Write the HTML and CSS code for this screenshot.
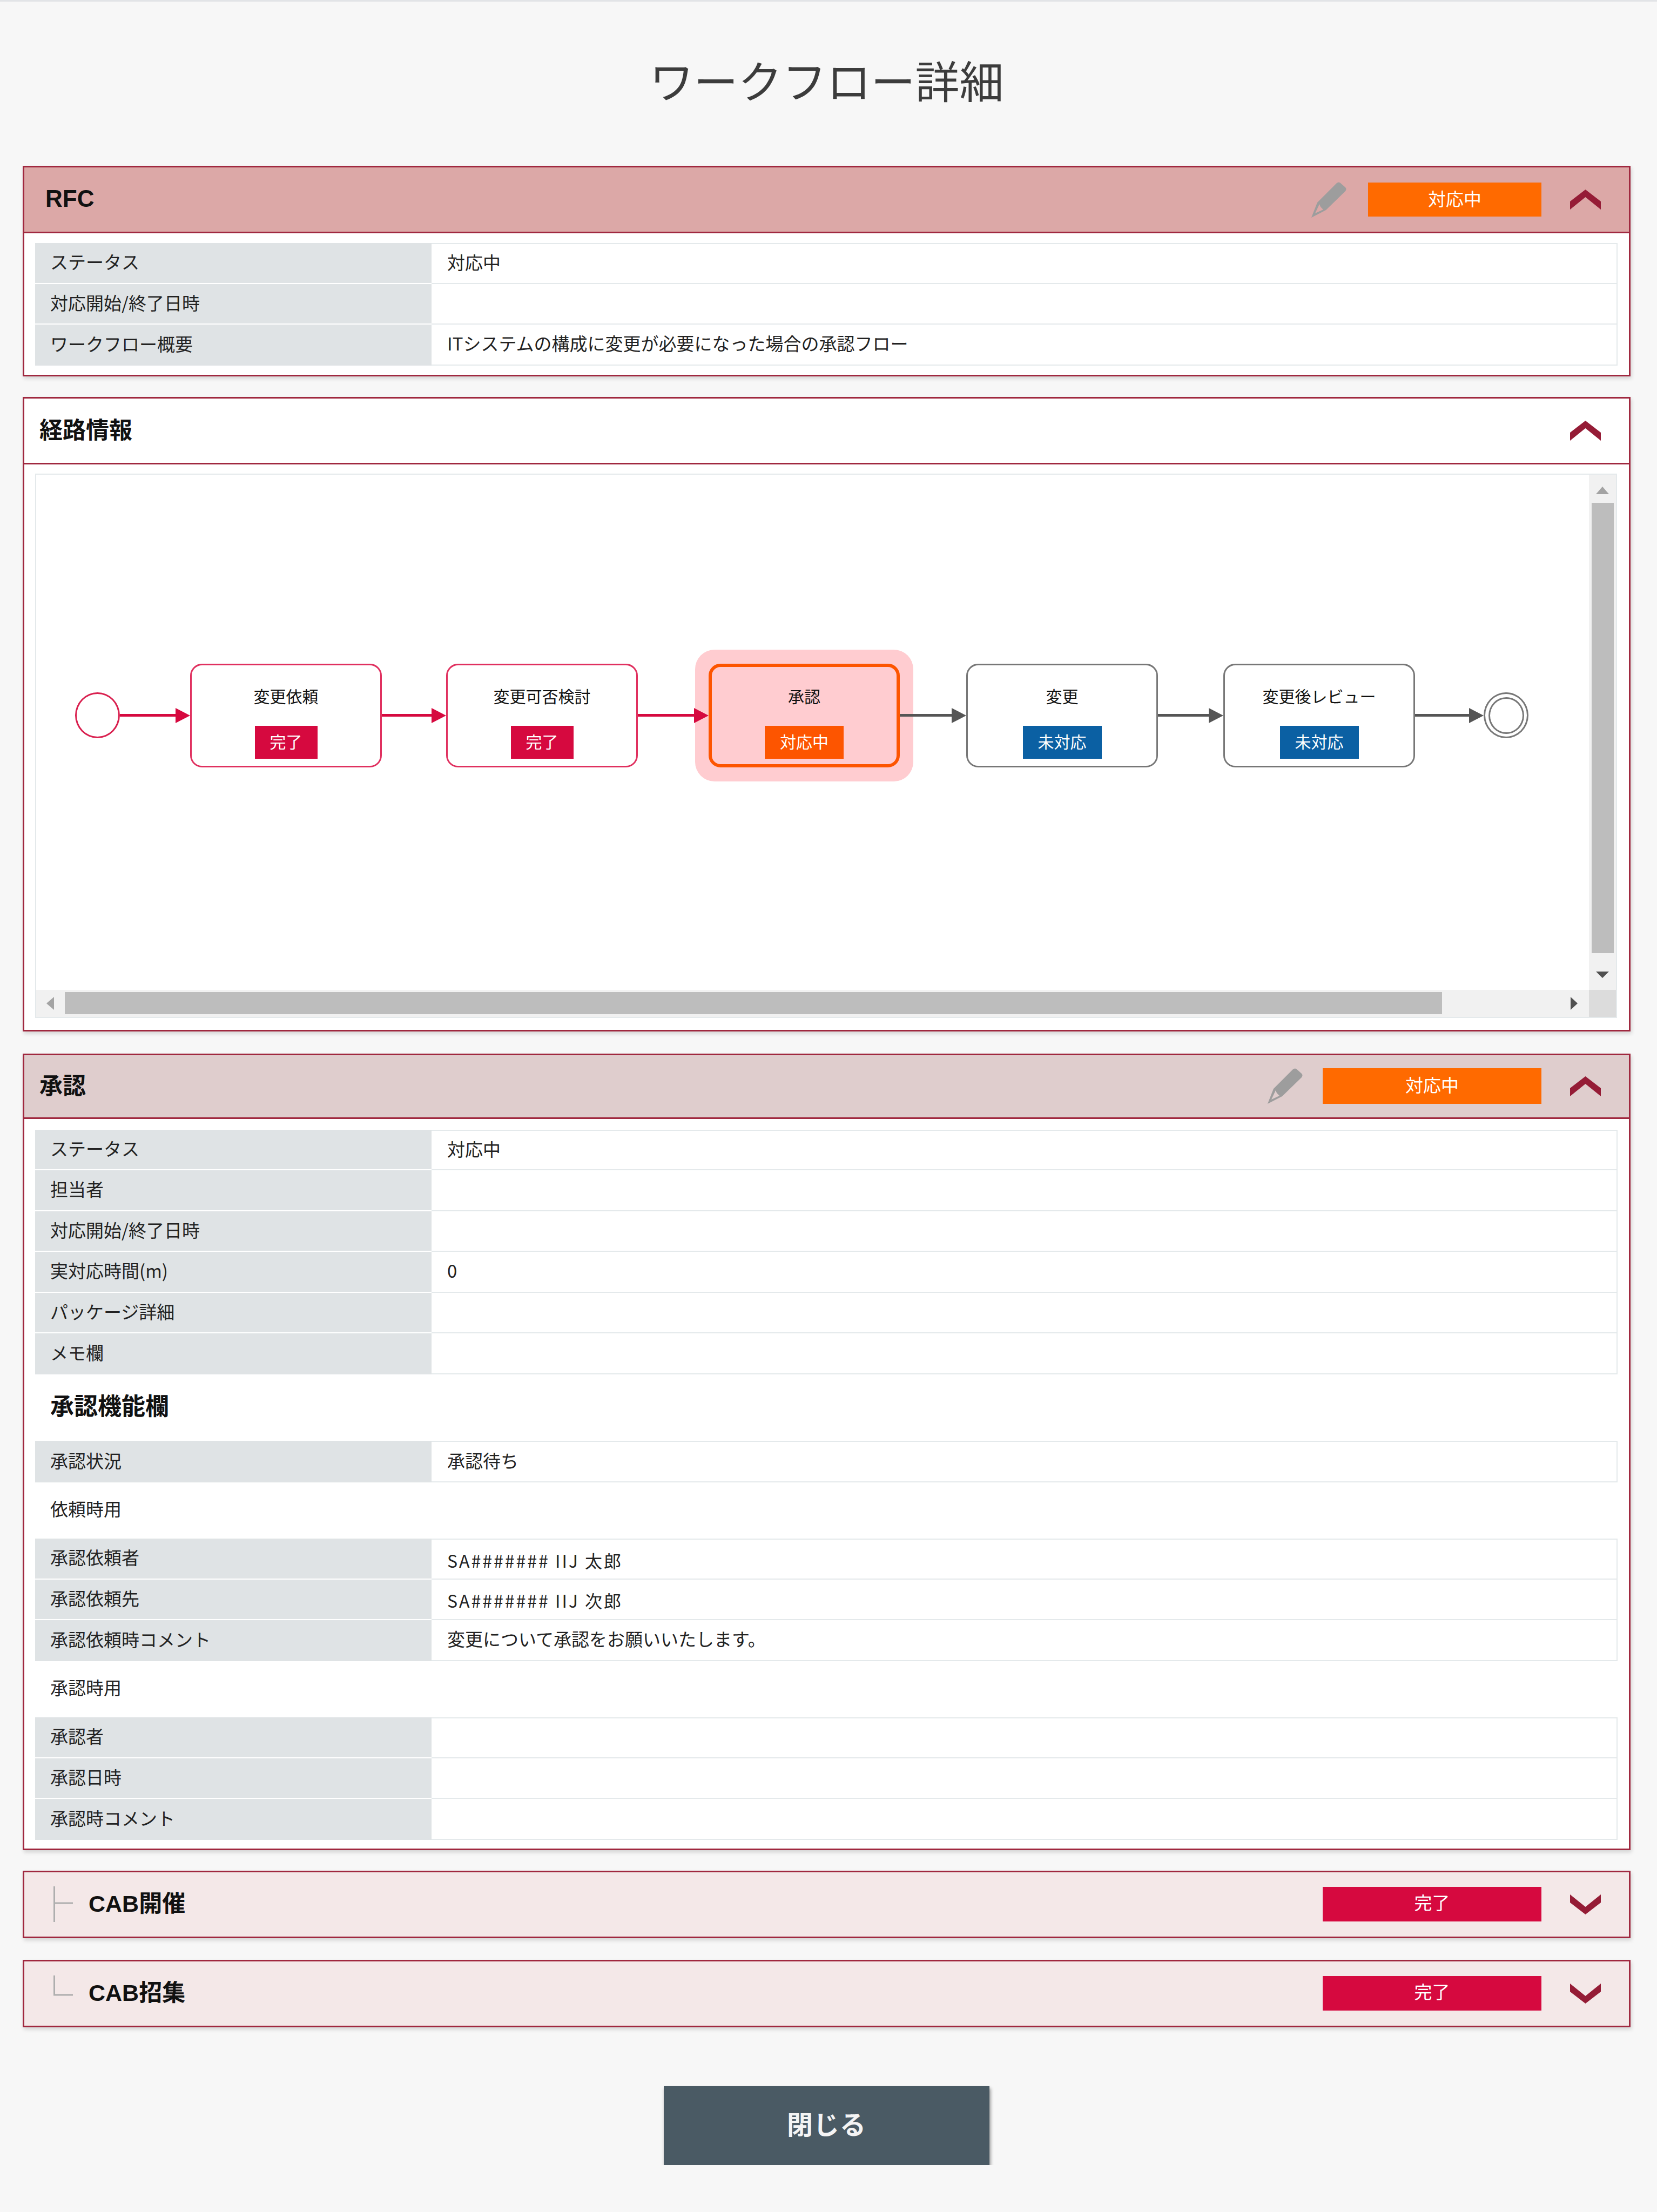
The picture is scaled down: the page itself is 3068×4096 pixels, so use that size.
FILE: index.html
```html
<!DOCTYPE html>
<html lang="ja">
<head>
<meta charset="utf-8">
<title>ワークフロー詳細</title>
<link rel="stylesheet" href="styles.css">
</head>
<body>
<svg class="defs" aria-hidden="true">
  <symbol id="chev" viewBox="0 0 57 37"><polygon points="28.5,0 57,22 57,37 28.5,14 0,37 0,22"/></symbol>
  <symbol id="pencil" viewBox="0 0 65 66"><path fill-rule="evenodd" d="M0 66 L11 38 L47 2 Q51 -1 54 2 L63 10 Q66 13 63 17 L27 52 Z M7 58 L22 51 L17 46 L15 41 Z"/></symbol>
</svg>
<main class="page">
  <h1 class="title">ワークフロー詳細</h1>

  <section class="card">
    <header class="head head-rfc">
      <h2 class="head-title">RFC</h2>
      <svg class="pencil"><use href="#pencil"/></svg>
      <span class="status status-orange status-narrow">対応中</span>
      <svg class="chev"><use href="#chev"/></svg>
    </header>
    <div class="body body-rfc">
      <dl class="kv">
        <dt>ステータス</dt><dd>対応中</dd>
        <dt>対応開始/終了日時</dt><dd></dd>
        <dt>ワークフロー概要</dt><dd>ITシステムの構成に変更が必要になった場合の承認フロー</dd>
      </dl>
    </div>
  </section>

  <section class="card">
    <header class="head head-route">
      <h2 class="head-title">経路情報</h2>
      <svg class="chev chev-solo"><use href="#chev"/></svg>
    </header>
    <div class="body body-route">
      <div class="viewport">
        <div class="flow">
          <div class="event event-start"></div>
          <div class="arrow arrow-done w130"><span class="tail"></span><span class="tip"></span></div>
          <div class="node node-done">
            <div class="node-label">変更依頼</div>
            <div class="node-status bg-red">完了</div>
          </div>
          <div class="arrow arrow-done w119"><span class="tail"></span><span class="tip"></span></div>
          <div class="node node-done">
            <div class="node-label">変更可否検討</div>
            <div class="node-status bg-red">完了</div>
          </div>
          <div class="arrow arrow-done w131"><span class="tail"></span><span class="tip"></span></div>
          <div class="node node-active">
            <div class="node-label">承認</div>
            <div class="node-status bg-flow-orange">対応中</div>
          </div>
          <div class="arrow arrow-todo w123"><span class="tail"></span><span class="tip"></span></div>
          <div class="node node-todo">
            <div class="node-label">変更</div>
            <div class="node-status bg-blue">未対応</div>
          </div>
          <div class="arrow arrow-todo w121"><span class="tail"></span><span class="tip"></span></div>
          <div class="node node-todo">
            <div class="node-label">変更後レビュー</div>
            <div class="node-status bg-blue">未対応</div>
          </div>
          <div class="arrow arrow-todo w127"><span class="tail"></span><span class="tip"></span></div>
          <div class="event event-end"><div class="event-inner"></div></div>
        </div>
        <div class="vbar">
          <span class="tri tri-up"></span>
          <span class="vthumb"></span>
          <span class="tri tri-down"></span>
        </div>
        <div class="hbar">
          <span class="tri tri-left"></span>
          <span class="hthumb"></span>
          <span class="tri tri-right"></span>
        </div>
        <div class="corner"></div>
      </div>
    </div>
  </section>

  <section class="card card-after-flow">
    <header class="head head-approve">
      <h2 class="head-title">承認</h2>
      <svg class="pencil pencil-wide"><use href="#pencil"/></svg>
      <span class="status status-orange status-tall">対応中</span>
      <svg class="chev"><use href="#chev"/></svg>
    </header>
    <div class="body body-approve">
      <dl class="kv">
        <dt>ステータス</dt><dd>対応中</dd>
        <dt>担当者</dt><dd></dd>
        <dt>対応開始/終了日時</dt><dd></dd>
        <dt>実対応時間(m)</dt><dd>0</dd>
        <dt>パッケージ詳細</dt><dd></dd>
        <dt>メモ欄</dt><dd></dd>
      </dl>
      <h3 class="section-title">承認機能欄</h3>
      <dl class="kv kv-single">
        <dt>承認状況</dt><dd>承認待ち</dd>
      </dl>
      <p class="sub">依頼時用</p>
      <dl class="kv">
        <dt>承認依頼者</dt><dd><span class="user-name">SA####### IIJ 太郎</span></dd>
        <dt>承認依頼先</dt><dd><span class="user-name">SA####### IIJ 次郎</span></dd>
        <dt>承認依頼時コメント</dt><dd>変更について承認をお願いいたします。</dd>
      </dl>
      <p class="sub">承認時用</p>
      <dl class="kv">
        <dt>承認者</dt><dd></dd>
        <dt>承認日時</dt><dd></dd>
        <dt>承認時コメント</dt><dd></dd>
      </dl>
    </div>
  </section>

  <section class="card">
    <header class="head head-child">
      <svg class="tree" viewBox="0 0 36 66"><path d="M1.5 0V66M1.5 31H36"/></svg>
      <h2 class="head-title">CAB開催</h2>
      <span class="status status-red">完了</span>
      <svg class="chev chev-down"><use href="#chev"/></svg>
    </header>
  </section>

  <section class="card card-last">
    <header class="head head-child">
      <svg class="tree" viewBox="0 0 36 66"><path d="M1.5 0V36H36"/></svg>
      <h2 class="head-title">CAB招集</h2>
      <span class="status status-red">完了</span>
      <svg class="chev chev-down"><use href="#chev"/></svg>
    </header>
  </section>

  <div class="actions"><button class="close" type="button">閉じる</button></div>
</main>
</body>
</html>
```

FILE: styles.css
```css
* { box-sizing: border-box; }
html, body { margin: 0; padding: 0; }
body {
  background: #f7f7f7;
  border-top: 3px solid #e2e4e7;
  color: #222;
  font-family: "Noto Sans CJK JP", "Noto Sans", sans-serif;
  font-size: 33px;
}
.defs { position: absolute; width: 0; height: 0; }
.page { padding: 0 49px 0 42px; }
.title {
  margin: 94px 0 110px;
  height: 100px;
  line-height: 100px;
  font-size: 82px;
  font-weight: 400;
  color: #3c3c3c;
  text-align: center;
}

/* cards */
.card {
  border: 3px solid #a0283f;
  background: #fff;
  box-shadow: 2px 4px 7px rgba(0, 0, 0, .14);
}
.card + .card { margin-top: 38px; }
.card + .card-after-flow { margin-top: 41px; }
.card + .card-last { margin-top: 40px; }

.head {
  display: flex;
  align-items: center;
  padding: 0 52px 0 28px;
  border-bottom: 3px solid #a0283f;
}
.head-rfc { height: 122px; background: #dca8a7; padding-left: 39px; }
.head-route { height: 122px; }
.head-approve { height: 118px; background: #dfcdcd; }
.head-child { height: 119px; background: #f4e8e8; border-bottom: 0; padding-left: 54px; }
.head-title {
  margin: -1px 0 0;
  font-family: "Liberation Sans", "Noto Sans CJK JP", sans-serif;
  font-size: 43px;
  line-height: 60px;
  font-weight: 700;
  color: #111;
}
.head-rfc .head-title { margin-top: -4px; font-size: 44px; }
.head-child .head-title { margin-top: -3px; }

.pencil { width: 65px; height: 66px; margin-left: auto; fill: #9d9d9d; margin-right: 40px; }
.pencil-wide { margin-right: 37px; }

.status {
  display: flex;
  align-items: center;
  justify-content: center;
  width: 405px;
  height: 63px;
  padding-bottom: 5px;
  color: #fff;
  font-size: 33px;
  line-height: 1;
}
.status-narrow { width: 321px; }
.status-tall { height: 66px; }
.status-orange { background: #ff6a00; }
.status-red { background: #d6093f; margin-left: auto; height: 64px; padding-bottom: 8px; }

.chev { width: 57px; height: 37px; margin-left: 53px; fill: #951c36; flex: none; }
.chev-solo { margin-left: auto; }
.chev-down { transform: scaleY(-1); }

.tree { width: 36px; height: 66px; margin-right: 29px; fill: none; stroke: #aeaeae; stroke-width: 3; flex: none; }

.body { padding: 18px 21px 17px 20px; }
.body-route { padding: 17px 22px 22px 20px; }
.body-approve { padding-top: 20px; padding-bottom: 16px; }

/* key-value tables */
.kv {
  display: grid;
  grid-template-columns: 734px 1fr;
  grid-auto-rows: 75.5px;
  margin: 0;
}
.kv-single { grid-auto-rows: 77px; }
.kv dt, .kv dd {
  display: flex;
  align-items: center;
  margin: 0;
  padding-bottom: 3px;
  line-height: 1.2;
  color: #222;
}
.kv dt {
  padding-left: 28px;
  background: #dfe3e5;
  border-bottom: 2px solid #fff;
}
.kv dt:last-of-type { border-bottom: 0; }
.kv dd {
  padding-left: 29px;
  border-right: 2px solid #e4e9eb;
  border-bottom: 2px solid #e4e9eb;
}
.kv dd:first-of-type { border-top: 2px solid #e4e9eb; }
.user-name { letter-spacing: 3px; padding-top: 7px; font-size: 32px; }

.section-title {
  margin: 0;
  height: 123px;
  padding: 26px 0 0 28px;
  font-size: 44px;
  line-height: 60px;
  font-weight: 700;
  color: #111;
}
.sub {
  margin: 0;
  height: 104.5px;
  padding: 24px 0 0 28px;
  line-height: 48px;
}

/* diagram viewport */
.viewport {
  display: grid;
  grid-template-columns: 1fr 50px;
  grid-template-rows: 1fr 50px;
  height: 1008px;
  border: 2px solid #e4e9eb;
}
.flow {
  position: relative;
  z-index: 0;
  display: flex;
  align-items: center;
  padding: 0 0 62px 72px;
  overflow: hidden;
  background: #fff;
}
.event { flex: none; width: 83px; height: 85px; border-radius: 50%; background: #fff; }
.event-start { border: 3px solid #d9204f; }
.event-end { display: flex; align-items: center; justify-content: center; border: 3px solid #777; }
.event-inner { width: 66px; height: 68px; border: 3px solid #777; border-radius: 50%; }

.arrow { flex: none; display: flex; align-items: center; height: 30px; }
.tail { flex: 1; height: 5px; }
.tip { flex: none; width: 0; height: 0; border-top: 14px solid transparent; border-bottom: 14px solid transparent; border-left: 27px solid; }
.arrow-done .tail { background: #d6093f; }
.arrow-done .tip { border-left-color: #d6093f; }
.arrow-todo .tail { background: #555; }
.arrow-todo .tip { border-left-color: #555; }
.w130 { width: 130px; }
.w119 { width: 119px; }
.w131 { width: 131px; }
.w123 { width: 123px; }
.w121 { width: 121px; }
.w127 { width: 127px; }

.node {
  flex: none;
  position: relative;
  display: flex;
  flex-direction: column;
  align-items: center;
  width: 355px;
  height: 192px;
  padding-top: 36px;
  border: 3px solid;
  border-radius: 22px;
  background: #fff;
}
.node-done { border-color: #e0305f; }
.node-todo { border-color: #777; }
.node-active {
  width: 354px;
  padding-top: 33px;
  border: 6px solid #fd5500;
  background: #ffccd0;
}
.node-active::before {
  content: "";
  position: absolute;
  inset: -32px -31px;
  z-index: -1;
  border-radius: 36px;
  background: #ffccd0;
}
.node-label { height: 40px; line-height: 40px; font-size: 30px; color: #111; }
.node-status {
  margin-top: 36px;
  height: 61px;
  padding: 0 28px 5px;
  line-height: 56px;
  font-size: 30px;
  color: #fff;
}
.bg-red { background: #d6093f; }
.bg-flow-orange { background: #fd5500; }
.bg-blue { background: #0b60a3; }

/* scrollbars */
.vbar {
  display: flex;
  flex-direction: column;
  align-items: center;
  background: #f1f1f1;
}
.hbar {
  display: flex;
  align-items: center;
  background: #f1f1f1;
  padding-left: 19px;
}
.corner { background: #dcdcdc; }
.tri { flex: none; width: 0; height: 0; }
.tri-up { margin-top: 22px; border: 12px solid transparent; border-top: 0; border-bottom: 14px solid #a3a3a3; }
.vthumb { flex: none; width: 41px; height: 834px; margin-top: 16px; background: #bdbdbd; }
.tri-down { margin-top: 34px; border: 12px solid transparent; border-bottom: 0; border-top: 12px solid #505050; }
.tri-left { border: 12px solid transparent; border-left: 0; border-right: 14px solid #a3a3a3; }
.hthumb { flex: none; width: 2550px; height: 41px; margin-left: 20px; background: #bdbdbd; }
.tri-right { margin-left: 238px; border: 12px solid transparent; border-right: 0; border-left: 13px solid #505050; }

/* footer */
.actions { display: flex; justify-content: center; margin-top: 109px; }
.close {
  width: 603px;
  height: 146px;
  padding: 0 0 10px;
  border: 0;
  background: #4a5a64;
  color: #f4f4f4;
  font-family: inherit;
  font-size: 48px;
  font-weight: 700;
  letter-spacing: 1px;
  box-shadow: 2px 4px 6px rgba(0, 0, 0, .4);
}
```
